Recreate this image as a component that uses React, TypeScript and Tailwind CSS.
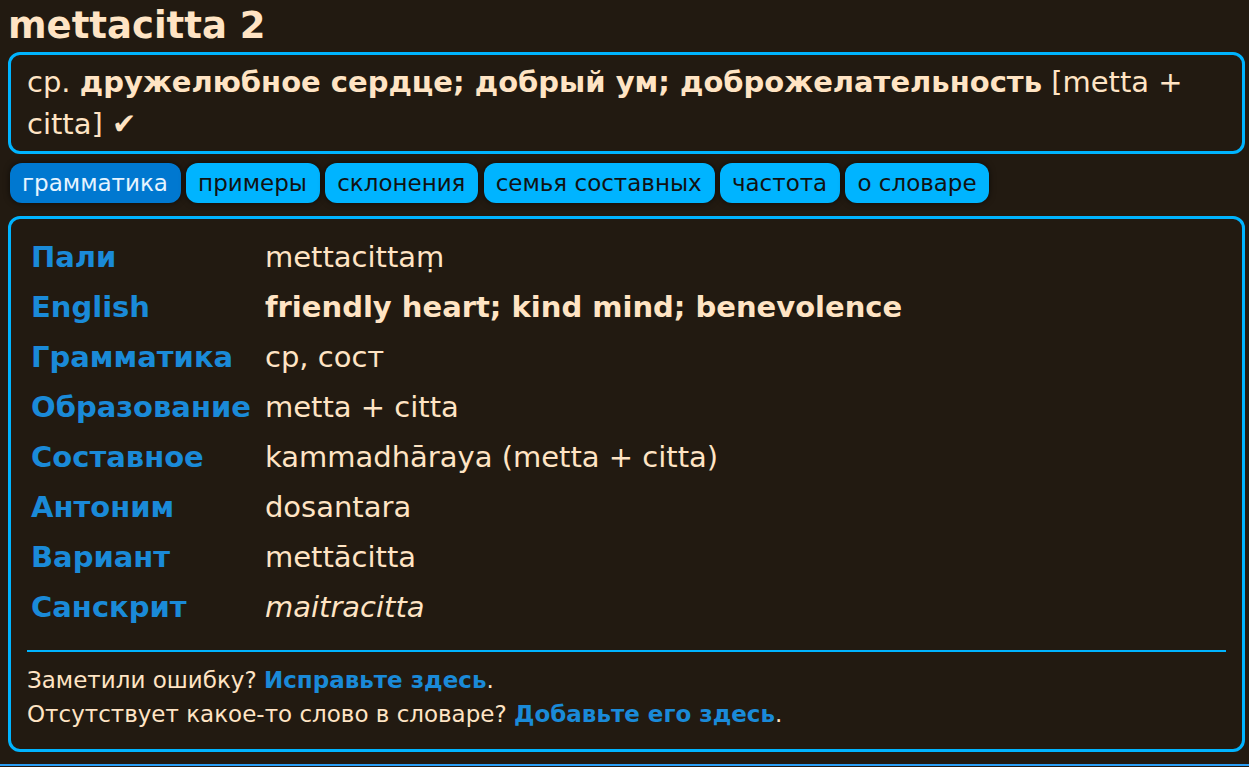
import React from "react";

const rows: { label: string; value: React.ReactNode }[] = [
  { label: "Пали", value: "mettacittaṃ" },
  { label: "English", value: <b>friendly heart; kind mind; benevolence</b> },
  { label: "Грамматика", value: "ср, сост" },
  { label: "Образование", value: "metta + citta" },
  { label: "Составное", value: "kammadhāraya (metta + citta)" },
  { label: "Антоним", value: "dosantara" },
  { label: "Вариант", value: "mettācitta" },
  { label: "Санскрит", value: <i>maitracitta</i> },
];

const tabs = ["грамматика", "примеры", "склонения", "семья составных", "частота", "о словаре"];

export default function App() {
  return (
    <div
      className="min-h-[767px] bg-[#221a11] text-[#ffe4c4] flex flex-col"
      style={{ fontFamily: '"DejaVu Sans", sans-serif' }}
    >
      <div className="pl-2 pr-[4px]">
        <h1 className="text-[37px] font-bold leading-[52px] h-[52px]">mettacitta 2</h1>
        <div className="border-[3px] border-[#00b4ff] rounded-[12px] px-4 py-[6px] text-[29px] leading-[42px]">
          ср. <b>дружелюбное сердце; добрый ум; доброжелательность</b> [metta + citta] ✔
        </div>
        <div className="flex gap-[5.4px] pl-[2px] mt-[9px]">
          {tabs.map((t, i) => (
            <div
              key={t}
              className={
                "h-[40px] flex items-center pl-[12px] pr-[12.8px] rounded-[12px] text-[23px] shadow-[0_0_6px_rgba(0,0,0,0.6)] " +
                (i === 0 ? "bg-[#0078d0] text-[#e6f4ff]" : "bg-[#00b4ff] text-[#121212]")
              }
            >
              {t}
            </div>
          ))}
        </div>
        <div className="mt-[13px] border-[3px] border-[#00b4ff] rounded-[12px] px-4 pt-[13px] pb-[18px]">
          <div className="grid grid-cols-[auto_1fr] gap-x-[14px] px-[4px] text-[29px] leading-[42px]">
            {rows.map((r) => (
              <React.Fragment key={r.label}>
                <div className="font-bold text-[#1a8ad8] py-[4px]">{r.label}</div>
                <div className="py-[4px]">{r.value}</div>
              </React.Fragment>
            ))}
          </div>
          <div className="h-[2px] bg-[#00b4ff] mt-[18px] mb-[11px]" />
          <div className="text-[23px] leading-[34px]">
            <div>
              Заметили ошибку? <b className="text-[#1a8ad8]">Исправьте здесь</b>.
            </div>
            <div>
              Отсутствует какое-то слово в словаре? <b className="text-[#1a8ad8]">Добавьте его здесь</b>.
            </div>
          </div>
        </div>
      </div>
      <div className="mt-auto h-[2px] bg-[#2a9df4] mb-[1px]" />
    </div>
  );
}
